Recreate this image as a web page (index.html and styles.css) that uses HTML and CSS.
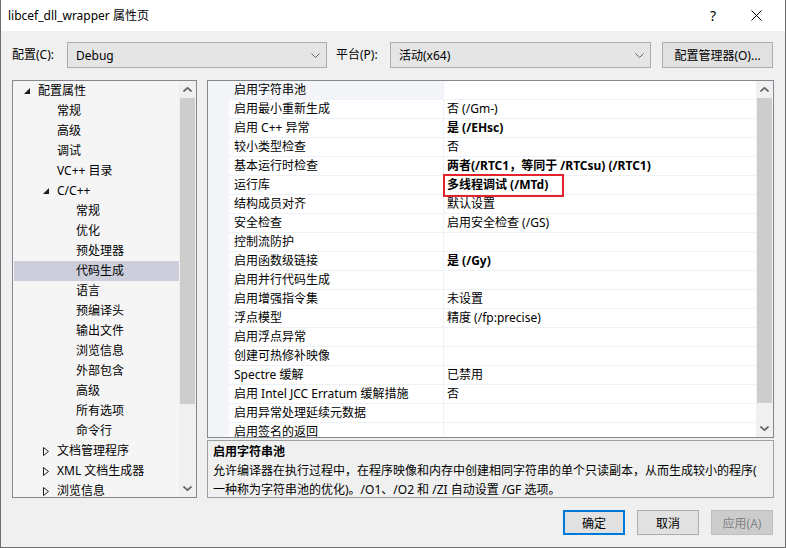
FILE: index.html
```html
<!DOCTYPE html>
<html lang="zh-CN">
<head>
  <meta charset="UTF-8" />
  <title>libcef_dll_wrapper 属性页</title>
  <link rel="stylesheet" href="styles.css">
</head>
<body>
<div class="window">

  <div class="titlebar">
    <span class="title">libcef_dll_wrapper 属性页</span>
    <span class="tb-help">?</span>
    <span class="tb-close">
      <svg viewBox="0 0 11 11" width="11" height="11"><path d="M0.5 0.5L10.5 10.5M10.5 0.5L0.5 10.5" stroke="#000" stroke-width="1" fill="none"/></svg>
    </span>
  </div>

  <div class="toolbar">
    <span class="label label-config">配置(C):</span>
    <div class="combo combo-config">
      <span>Debug</span>
      <svg class="chev" viewBox="0 0 9 5" width="9" height="5"><path d="M0.5 0.5L4.5 4.5L8.5 0.5" stroke="#606060" fill="none"/></svg>
    </div>
    <span class="label label-platform">平台(P):</span>
    <div class="combo combo-platform">
      <span>活动(x64)</span>
      <svg class="chev" viewBox="0 0 9 5" width="9" height="5"><path d="M0.5 0.5L4.5 4.5L8.5 0.5" stroke="#606060" fill="none"/></svg>
    </div>
    <button class="btn btn-mgr">配置管理器(O)...</button>
  </div>

  <div class="main">
    <!-- left tree -->
    <div class="panel tree">
      <ul class="tree-list">
        <li class="lv0"><span class="tw"><svg viewBox="0 0 6 6" width="6" height="6"><polygon points="6,0 6,6 0,6" fill="#1e1e1e"/></svg></span>配置属性</li>
        <li class="lv1"><span class="tw"></span>常规</li>
        <li class="lv1"><span class="tw"></span>高级</li>
        <li class="lv1"><span class="tw"></span>调试</li>
        <li class="lv1"><span class="tw"></span>VC++ 目录</li>
        <li class="lv1"><span class="tw"><svg viewBox="0 0 6 6" width="6" height="6"><polygon points="6,0 6,6 0,6" fill="#1e1e1e"/></svg></span>C/C++</li>
        <li class="lv2">常规</li>
        <li class="lv2">优化</li>
        <li class="lv2">预处理器</li>
        <li class="lv2 selected">代码生成</li>
        <li class="lv2">语言</li>
        <li class="lv2">预编译头</li>
        <li class="lv2">输出文件</li>
        <li class="lv2">浏览信息</li>
        <li class="lv2">外部包含</li>
        <li class="lv2">高级</li>
        <li class="lv2">所有选项</li>
        <li class="lv2">命令行</li>
        <li class="lv1"><span class="tw"><svg viewBox="0 0 6 9" width="6" height="9"><polygon points="0.5,0.5 5.5,4.5 0.5,8.5" fill="none" stroke="#1e1e1e"/></svg></span>文档管理程序</li>
        <li class="lv1"><span class="tw"><svg viewBox="0 0 6 9" width="6" height="9"><polygon points="0.5,0.5 5.5,4.5 0.5,8.5" fill="none" stroke="#1e1e1e"/></svg></span>XML 文档生成器</li>
        <li class="lv1"><span class="tw"><svg viewBox="0 0 6 9" width="6" height="9"><polygon points="0.5,0.5 5.5,4.5 0.5,8.5" fill="none" stroke="#1e1e1e"/></svg></span>浏览信息</li>
      </ul>
      <div class="vscroll tree-scroll">
        <div class="arrow"><svg viewBox="0 0 9 5" width="9" height="5"><path d="M0.5 4.5L4.5 0.8L8.5 4.5" stroke="#606060" stroke-width="1.6" fill="none"/></svg></div>
        <div class="thumb"></div>
        <div class="track"></div>
        <div class="arrow"><svg viewBox="0 0 9 5" width="9" height="5"><path d="M0.5 0.5L4.5 4.2L8.5 0.5" stroke="#606060" stroke-width="1.6" fill="none"/></svg></div>
      </div>
    </div>

    <!-- right side -->
    <div class="right">
      <div class="panel grid">
        <div class="rows">
          <div class="row current"><span class="gut"></span><span class="name">启用字符串池</span><span class="val"></span></div>
          <div class="row"><span class="gut"></span><span class="name">启用最小重新生成</span><span class="val">否 (/Gm-)</span></div>
          <div class="row"><span class="gut"></span><span class="name">启用 C++ 异常</span><span class="val bold">是 (/EHsc)</span></div>
          <div class="row"><span class="gut"></span><span class="name">较小类型检查</span><span class="val">否</span></div>
          <div class="row"><span class="gut"></span><span class="name">基本运行时检查</span><span class="val bold">两者(/RTC1，等同于 /RTCsu) (/RTC1)</span></div>
          <div class="row"><span class="gut"></span><span class="name">运行库</span><span class="val bold">多线程调试 (/MTd)<i class="mark"></i></span></div>
          <div class="row"><span class="gut"></span><span class="name">结构成员对齐</span><span class="val">默认设置</span></div>
          <div class="row"><span class="gut"></span><span class="name">安全检查</span><span class="val">启用安全检查 (/GS)</span></div>
          <div class="row"><span class="gut"></span><span class="name">控制流防护</span><span class="val"></span></div>
          <div class="row"><span class="gut"></span><span class="name">启用函数级链接</span><span class="val bold">是 (/Gy)</span></div>
          <div class="row"><span class="gut"></span><span class="name">启用并行代码生成</span><span class="val"></span></div>
          <div class="row"><span class="gut"></span><span class="name">启用增强指令集</span><span class="val">未设置</span></div>
          <div class="row"><span class="gut"></span><span class="name">浮点模型</span><span class="val">精度 (/fp:precise)</span></div>
          <div class="row"><span class="gut"></span><span class="name">启用浮点异常</span><span class="val"></span></div>
          <div class="row"><span class="gut"></span><span class="name">创建可热修补映像</span><span class="val"></span></div>
          <div class="row"><span class="gut"></span><span class="name">Spectre 缓解</span><span class="val">已禁用</span></div>
          <div class="row"><span class="gut"></span><span class="name">启用 Intel JCC Erratum 缓解措施</span><span class="val">否</span></div>
          <div class="row"><span class="gut"></span><span class="name">启用异常处理延续元数据</span><span class="val"></span></div>
          <div class="row"><span class="gut"></span><span class="name">启用签名的返回</span><span class="val"></span></div>
        </div>
        <div class="vscroll grid-scroll">
          <div class="arrow"><svg viewBox="0 0 9 5" width="9" height="5"><path d="M0.5 4.5L4.5 0.8L8.5 4.5" stroke="#606060" stroke-width="1.6" fill="none"/></svg></div>
          <div class="thumb"></div>
          <div class="track"></div>
          <div class="arrow"><svg viewBox="0 0 9 5" width="9" height="5"><path d="M0.5 0.5L4.5 4.2L8.5 0.5" stroke="#606060" stroke-width="1.6" fill="none"/></svg></div>
        </div>
      </div>

      <div class="panel desc">
        <div class="desc-title">启用字符串池</div>
        <div class="desc-text">允许编译器在执行过程中，在程序映像和内存中创建相同字符串的单个只读副本，从而生成较小的程序(<br>一种称为字符串池的优化)。/O1、/O2 和 /ZI 自动设置 /GF 选项。</div>
      </div>
    </div>
  </div>

  <div class="footer">
    <button class="btn btn-ok">确定</button>
    <button class="btn">取消</button>
    <button class="btn btn-disabled">应用(A)</button>
  </div>

</div>
</body>
</html>
```

FILE: styles.css
```css
* {
  box-sizing: border-box;
}

body {
  margin: 0;
  padding: 0;
  font-family: "Noto Sans", "Noto Sans CJK SC", sans-serif;
  font-size: 12px;
  color: #000;
}

.window {
  width: 786px;
  height: 548px;
  background: #f0f0f0;
  border: 1px solid #6e6e6e;
  border-top: none;
  display: flex;
  flex-direction: column;
  overflow: hidden;
}

/* title bar */
.titlebar {
  height: 31px;
  background: #fff;
  display: flex;
  align-items: center;
  padding-left: 7px;
  flex-shrink: 0;
}

.title {
  flex: 1;
  line-height: 16px;
}

.tb-help {
  font-size: 14px;
  margin-right: 35px;
  line-height: 16px;
}

.tb-close {
  width: 11px;
  height: 11px;
  margin-right: 23px;
  display: flex;
}

/* config row */
.toolbar {
  display: flex;
  align-items: center;
  height: 26px;
  margin-top: 11px;
  padding-left: 11px;
  flex-shrink: 0;
}

.label {
  line-height: 16px;
}

.label-config {
  width: 55px;
}

.label-platform {
  width: 54px;
  margin-left: 9px;
}

.combo {
  height: 26px;
  background: #e5e5e5;
  border: 1px solid #adadad;
  display: flex;
  align-items: center;
  padding: 0 6px 0 8px;
}

.combo span {
  flex: 1;
}

.combo-config {
  width: 260px;
}

.combo-platform {
  width: 261px;
}

.btn {
  font: inherit;
  color: #000;
  background: #e1e1e1;
  border: 1px solid #adadad;
  height: 25px;
  width: 62px;
  padding: 0;
}

.btn-mgr {
  width: 111px;
  height: 26px;
  margin-left: 11px;
}

/* main area */
.main {
  display: flex;
  gap: 10px;
  margin-top: 12px;
  padding-left: 11px;
  height: 418px;
  flex-shrink: 0;
}

.panel {
  border: 1px solid #828790;
  background: #fff;
}

.tree {
  width: 185px;
  background: #f5f5f5;
  display: flex;
  overflow: hidden;
}

.tree-list {
  list-style: none;
  margin: 0;
  padding: 0 0 0 1px;
  flex: 1;
  overflow: hidden;
}

.tree-list li {
  height: 20px;
  line-height: 20px;
  white-space: nowrap;
  display: flex;
  align-items: center;
}

.tw {
  width: 24px;
  display: flex;
  align-items: center;
  padding-left: 10px;
}

.lv0 {
  padding-left: 0;
}

.lv1 {
  padding-left: 19px;
}

.lv2 {
  padding-left: 62px;
}

.tree-list li.selected {
  background: #cccedb;
}

/* scroll bars */
.vscroll {
  width: 17px;
  background: #f0f0f0;
  display: flex;
  flex-direction: column;
  flex-shrink: 0;
}

.vscroll .arrow {
  height: 17px;
  display: flex;
  align-items: center;
  justify-content: center;
}

.vscroll .thumb {
  background: #cdcdcd;
  margin: 0 1px;
}

.vscroll .track {
  flex: 1;
}

.tree-scroll .thumb {
  height: 306px;
}

.grid-scroll .thumb {
  height: 305px;
}

/* property grid */
.right {
  width: 567px;
  display: flex;
  flex-direction: column;
  gap: 2px;
}

.grid {
  height: 358px;
  display: flex;
  overflow: hidden;
}

.rows {
  flex: 1;
  overflow: hidden;
}

.row {
  display: flex;
  height: 19px;
  line-height: 18px;
  white-space: nowrap;
}

.gut {
  width: 21px;
  background: #f3f5f8;
  flex-shrink: 0;
}

.name {
  width: 215px;
  padding-left: 5px;
  border-bottom: 1px solid #eef1f5;
  border-right: 1px solid #eef1f5;
  flex-shrink: 0;
}

.val {
  flex: 1;
  padding-left: 3px;
  border-bottom: 1px solid #eef1f5;
  position: relative;
}

.row.current .name {
  background: #f3f5f8;
}

.bold {
  font-weight: bold;
}

.mark {
  position: absolute;
  left: -1px;
  top: -2px;
  width: 121px;
  height: 23px;
  border: 2px solid #e3232b;
}

/* description */
.desc {
  height: 58px;
  background: #f0f0f0;
  border-color: #a0a0a0;
  padding: 1px 5px 0;
  line-height: 19px;
  white-space: nowrap;
  overflow: hidden;
}

.desc-title {
  font-weight: bold;
}

/* buttons */
.footer {
  display: flex;
  justify-content: flex-end;
  gap: 12px;
  margin-top: 12px;
  padding-right: 12px;
}

.btn-ok {
  border: 2px solid #0078d7;
}

.btn-disabled {
  background: #cccccc;
  border-color: #bfbfbf;
  color: #838383;
}
```
